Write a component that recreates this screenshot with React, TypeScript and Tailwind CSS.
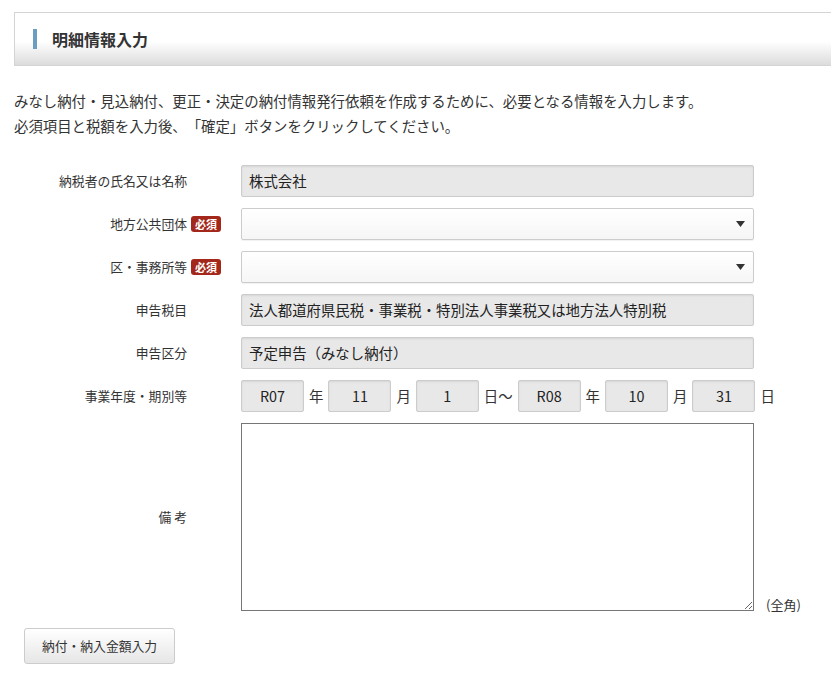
import React from "react";

const font = "font-['Noto_Sans_CJK_JP','Noto_Sans',sans-serif]";

function Badge() {
  return (
    <span className="ml-[4px] inline-flex h-[16px] w-[30px] items-center justify-center rounded-[3px] bg-[#a3281b] text-[11px] font-bold leading-none text-white">
      必須
    </span>
  );
}

function Label({ text, badge }: { text: string; badge?: boolean }) {
  return (
    <div
      className={
        "flex w-[221px] shrink-0 items-center justify-end text-[12.8px] text-[#333] " +
        (badge ? "" : "pr-[34px]")
      }
    >
      <span>{text}</span>
      {badge && <Badge />}
    </div>
  );
}

function ReadOnly({ text, className }: { text: string; className?: string }) {
  return (
    <div
      className={
        "flex h-[32px] items-center rounded-[2px] border border-[#cccccc] bg-[#e8e8e8] text-[14.4px] text-[#222] shadow-[inset_0_1px_2px_rgba(0,0,0,0.08)] " +
        (className ?? "")
      }
    >
      {text}
    </div>
  );
}

function SelectBox() {
  return (
    <div className="relative flex h-[32px] w-[513px] items-center rounded-[2px] border border-[#cccccc] bg-gradient-to-b from-white to-[#f6f6f6] shadow-[0_1px_1px_rgba(0,0,0,0.06)]">
      <svg
        className="absolute right-[8px] top-[12px]"
        width="9"
        height="6"
        viewBox="0 0 9 6"
      >
        <path d="M0 0 H9 L4.5 6 Z" fill="#333" />
      </svg>
    </div>
  );
}

function Row({ children }: { children: React.ReactNode }) {
  return <div className="flex items-center gap-[20px]">{children}</div>;
}

function DateBox({ v }: { v: string }) {
  return <ReadOnly text={v} className="w-[63px] justify-center" />;
}

export default function App() {
  return (
    <div className={`${font} min-h-[680px] w-[831px] overflow-hidden bg-white pt-[12px] text-[#333] [text-spacing-trim:space-all]`}>
      {/* header */}
      <div className="ml-[14px] flex h-[54px] items-center border-y border-l border-[#d4d4d4] bg-gradient-to-b from-white from-[55%] to-[#dcdcdc] pl-[18px]">
        <span className="h-[20px] w-[4px] bg-[#6b9cc2]" />
        <span className="ml-[15px] text-[16px] font-bold text-[#333]">明細情報入力</span>
      </div>

      {/* description */}
      <div className="ml-[14px] mt-[22px] text-[14.4px] leading-[25px] text-[#333]">
        <p>みなし納付・見込納付、更正・決定の納付情報発行依頼を作成するために、必要となる情報を入力します。</p>
        <p>必須項目と税額を入力後、「確定」ボタンをクリックしてください。</p>
      </div>

      {/* form */}
      <div className="mt-[27px] flex flex-col gap-[11px]">
        <Row>
          <Label text="納税者の氏名又は名称" />
          <ReadOnly text="株式会社" className="w-[513px] pl-[7px]" />
        </Row>
        <Row>
          <Label text="地方公共団体" badge />
          <SelectBox />
        </Row>
        <Row>
          <Label text="区・事務所等" badge />
          <SelectBox />
        </Row>
        <Row>
          <Label text="申告税目" />
          <ReadOnly
            text="法人都道府県民税・事業税・特別法人事業税又は地方法人特別税"
            className="w-[513px] pl-[7px]"
          />
        </Row>
        <Row>
          <Label text="申告区分" />
          <ReadOnly text="予定申告（みなし納付）" className="w-[513px] pl-[7px]" />
        </Row>
        <Row>
          <Label text="事業年度・期別等" />
          <div className="flex items-center gap-[5px] text-[14.4px] text-[#333]">
            <DateBox v="R07" />
            <span>年</span>
            <DateBox v="11" />
            <span>月</span>
            <DateBox v="1" />
            <span>日〜</span>
            <DateBox v="R08" />
            <span>年</span>
            <DateBox v="10" />
            <span>月</span>
            <DateBox v="31" />
            <span>日</span>
          </div>
        </Row>
        <Row>
          <Label text="備 考" />
          <div className="flex items-end gap-[12px]">
            <textarea className="block h-[188px] w-[513px] resize border border-[#767676] bg-white outline-none" />
            <span className="mb-[-3px] text-[13px] text-[#333]">(全角)</span>
          </div>
        </Row>
      </div>

      {/* button */}
      <div className="ml-[24px] mt-[17px]">
        <button className="h-[36px] w-[151px] rounded-[3px] border border-[#cccccc] bg-gradient-to-b from-white to-[#e6e6e6] text-[12.8px] text-[#333]">
          納付・納入金額入力
        </button>
      </div>
    </div>
  );
}
